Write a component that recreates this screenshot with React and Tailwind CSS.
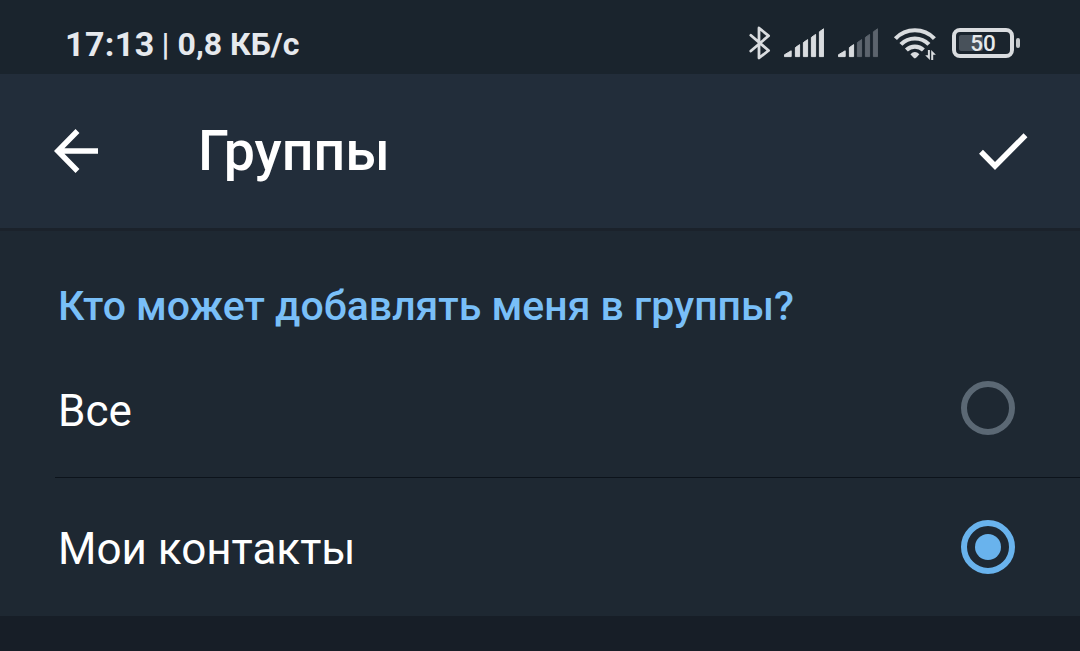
import clsx from "clsx";

const OPTIONS = [
  { id: "all", label: "Все", labelClass: "pt-[7px]" },
  { id: "contacts", label: "Мои контакты", labelClass: "pt-[3px]" },
];

const BARS = [
  "M0.4 28.6v-1.8l6.8-4v5.8z",
  "M11.4 28.6v-9l4.2-3v12z",
  "M19.4 28.6v-14l4.2-3v17z",
  "M27.4 28.6v-19.2l4.2-3v22.2z",
  "M35.4 28.6v-24.8l4.2-3v27.8z",
];

const BluetoothIcon = () => (
  <svg className="h-[34px] w-[22px]" viewBox="0 0 22 34" fill="none" stroke="#d9dcdf" strokeWidth="2.8" strokeLinejoin="round" strokeLinecap="round">
    <path d="M1.8 9.3 19.6 24.5 10 32V2l9.6 7.8L1.8 25" />
  </svg>
);

const SignalIcon = ({ level }) => (
  <svg className="h-[30px] w-10" viewBox="0 0 40 30">
    {BARS.map((d, i) => (
      <path key={d} d={d} fill={i < level ? "#d9dcdf" : "#5c646d"} stroke={i < level ? "#d9dcdf" : "#5c646d"} strokeWidth="1" strokeLinejoin="round" />
    ))}
  </svg>
);

const WifiIcon = () => (
  <svg className="h-[34px] w-[44px]" viewBox="0 0 44 34" fill="none" stroke="#d9dcdf" strokeWidth="4.2">
    <path d="M2.4 12.6a27 27 0 0 1 39 0" />
    <path d="M7.9 18.4a19.6 19.6 0 0 1 28 0" />
    <path d="M13.4 24a12.3 12.3 0 0 1 17 0" />
    <path d="M17.4 28.2q4.5-4.4 9 0l-3 3.4q-1.5 1.6-3 0z" fill="#d9dcdf" stroke="none" />
    <g fill="#d9dcdf" stroke="none">
      <path d="M34.9 24h2v10l-4.7-4.8h2.7z" />
      <path d="M38.2 34v-10l4.7 4.8h-2.7v5.2z" />
    </g>
  </svg>
);

const Battery = ({ value }) => (
  <div className="flex items-center gap-[2px]">
    <div className="relative h-[30px] w-[62px] rounded-[8px] border-4 border-[#d9dcdf] p-[3px]">
      <div className="h-4 rounded-[2px] bg-[#48515a]" style={{ width: `${value}%` }} />
      <span className="absolute inset-0 flex items-center justify-center pt-px text-[22.5px] leading-none font-medium text-[#e6e9eb]">
        {value}
      </span>
    </div>
    <div className="h-[10px] w-1 rounded-[2px] bg-[#c5c9cc]" />
  </div>
);

const Radio = ({ checked }) => (
  <span
    className={clsx(
      "flex h-[54px] w-[54px] items-center justify-center rounded-full border-[6px]",
      checked ? "border-[#69b3ed]" : "border-[#5b6874]"
    )}
  >
    {checked && <span className="h-[26px] w-[26px] rounded-full bg-[#69b3ed]" />}
  </span>
);

const App = () => {
  const selected = "contacts";

  return (
    <main className="flex h-[651px] w-[1080px] flex-col overflow-hidden bg-[#171e27] font-['Roboto',sans-serif] text-white">
      {/* Status bar */}
      <div className="flex h-[74px] shrink-0 items-start bg-[#1a242d] pt-[26px] pr-[60px] pl-[65px]">
        <div className="flex h-9 items-center whitespace-pre font-bold text-[#e6e9ed]">
          <span className="text-[34px] leading-9 tracking-[0.4px]">17:13</span>
          <span className="ml-[7px] text-[32px] leading-9"><span className="font-medium">|</span> 0,8 КБ/с</span>
        </div>
        <div className="ml-auto flex">
          <BluetoothIcon />
          <div className="mt-[2px] ml-[13px] flex gap-[14px]">
            <SignalIcon level={5} />
            <SignalIcon level={2} />
          </div>
          <div className="ml-[15px]"><WifiIcon /></div>
          <div className="mt-[2px] ml-[15px]"><Battery value={50} /></div>
        </div>
      </div>

      {/* Toolbar */}
      <header className="flex h-[154px] shrink-0 items-center bg-[#222d3a] pr-[52px] pl-[54px]">
        <svg className="h-11 w-[45px]" viewBox="0 0 45 44" fill="none" stroke="white" strokeWidth="5.5">
          <path d="M23.5 2 3.8 22l19.7 20M4 22h40" />
        </svg>
        <h1 className="ml-[99px] pt-[2px] text-[55.5px] leading-[64px] font-medium">Группы</h1>
        <svg className="ml-auto h-[38px] w-[50px]" viewBox="0 0 50 38" fill="none" stroke="white" strokeWidth="5.5">
          <path d="M3 19.8 17 34 47.5 3.2" />
        </svg>
      </header>

      <section className="h-[388px] shrink-0 border-t-[3px] border-[#1b222b] bg-[#1e2832]">
        <h2 className="mt-[50px] pl-[58px] text-[41px] leading-[50px] font-medium text-[#79bff8]">
          Кто может добавлять меня в группы?
        </h2>
        <div className="mt-[7px]">
          {OPTIONS.map((option, i) => (
            <div
              key={option.id}
              className={clsx("ml-[55px] flex h-[139px] items-center pr-[65px] pl-[3px]", i > 0 && "border-t border-[#0c131b]")}
            >
              <span className={clsx("text-[44px] leading-[52px]", option.labelClass)}>{option.label}</span>
              <span className="ml-auto"><Radio checked={option.id === selected} /></span>
            </div>
          ))}
        </div>
      </section>
    </main>
  );
};

export default App;
